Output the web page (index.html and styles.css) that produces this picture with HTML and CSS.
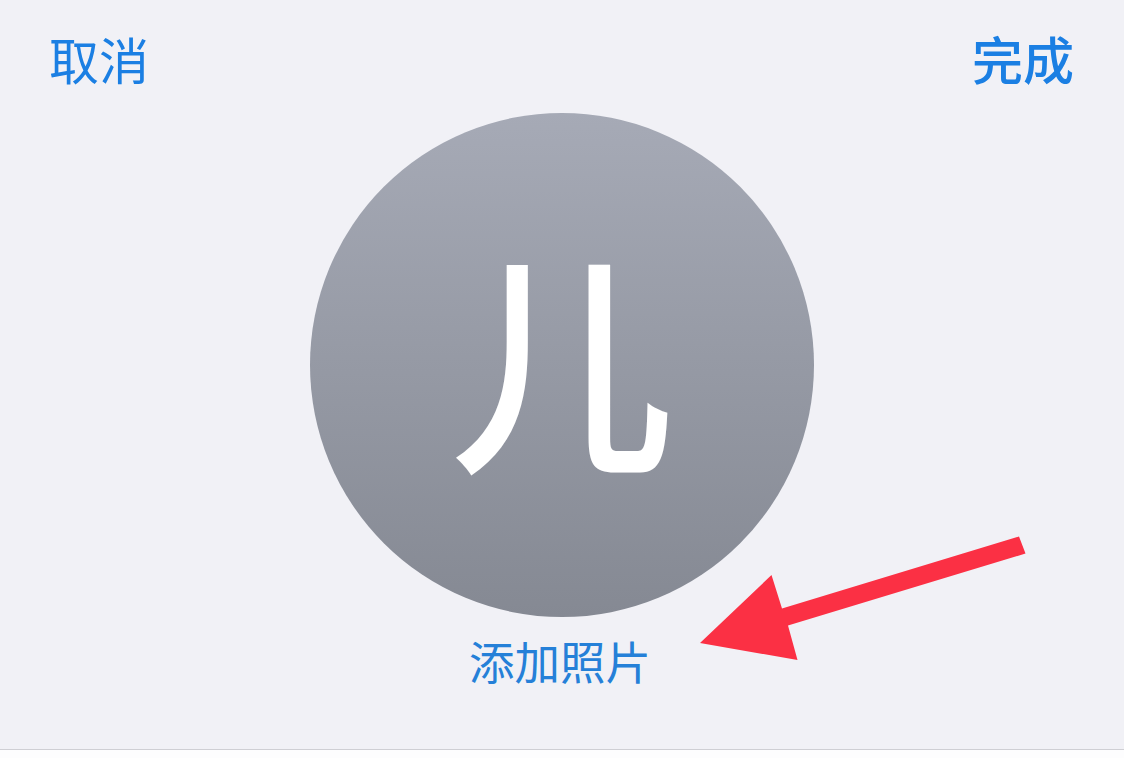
FILE: index.html
```html
<!DOCTYPE html>
<html lang="zh-CN">
<head>
<meta charset="utf-8">
<title>添加照片</title>
<link rel="stylesheet" href="styles.css">
</head>
<body>
<main class="sheet">
  <header class="nav">
    <span class="nav-btn">取消</span>
    <span class="nav-btn nav-btn-strong">完成</span>
  </header>
  <section class="profile">
    <div class="avatar"><span class="initial">儿</span></div>
    <span class="add-photo">添加照片</span>
  </section>
</main>
<svg class="arrow" width="1124" height="758" viewBox="0 0 1124 758" aria-hidden="true">
  <path d="M1019 536.500L1025.500 553.500L788 625.500L797.500 660L700 643L771.500 575L782 608.500Z"/>
</svg>
</body>
</html>
```

FILE: styles.css
```css
html, body {
  margin: 0;
  height: 758px;
  overflow: hidden;
  background: #fdfdfe;
  font-family: "Noto Sans CJK SC", "Noto Sans", sans-serif;
}
.sheet {
  height: 750px;
  box-sizing: border-box;
  background: #f1f1f6;
  border-bottom: 1px solid #cfcfd4;
  display: flex;
  flex-direction: column;
}
.nav {
  display: flex;
  justify-content: space-between;
  align-items: center;
  height: 113px;
  padding: 2px 50px 0 49px;
  box-sizing: border-box;
}
.nav-btn {
  font-size: 50px;
  line-height: 60px;
  color: #1b7fe3;
}
.nav-btn-strong {
  font-size: 51px;
  font-weight: 500;
}
.profile {
  display: flex;
  flex-direction: column;
  align-items: center;
}
.avatar {
  width: 504px;
  height: 504px;
  border-radius: 50%;
  background: linear-gradient(#a6aab6, #858993);
  display: flex;
  align-items: center;
  justify-content: center;
}
.initial {
  font-size: 236px;
  font-weight: 500;
  line-height: 1;
  color: #fff;
  margin-bottom: 27px;
  transform: scaleX(0.95);
}
.add-photo {
  margin-top: 15px;
  margin-right: 4px;
  font-size: 45.500px;
  line-height: 56px;
  color: #2580d8;
}
.arrow {
  position: absolute;
  left: 0;
  top: 0;
}
.arrow path {
  fill: #fb3044;
}
```
